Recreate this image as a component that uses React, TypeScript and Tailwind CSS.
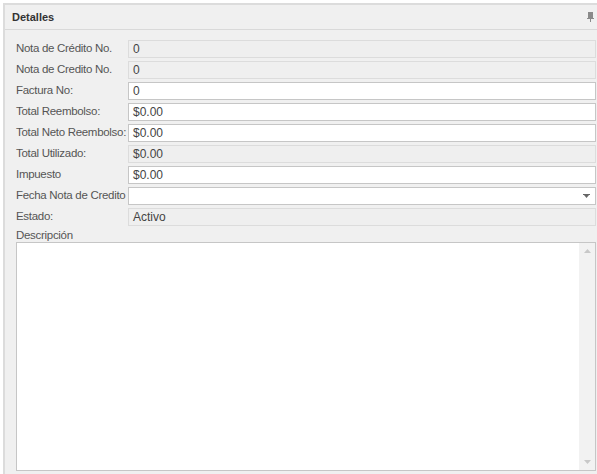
const rows: { label: string; value: string; readOnly?: boolean; select?: boolean }[] = [
  { label: "Nota de Crédito No.", value: "0", readOnly: true },
  { label: "Nota de Credito No.", value: "0", readOnly: true },
  { label: "Factura No:", value: "0" },
  { label: "Total Reembolso:", value: "$0.00" },
  { label: "Total Neto Reembolso:", value: "$0.00" },
  { label: "Total Utilizado:", value: "$0.00", readOnly: true },
  { label: "Impuesto", value: "$0.00" },
  { label: "Fecha Nota de Credito", value: "", select: true },
  { label: "Estado:", value: "Activo", readOnly: true },
];

export default function App() {
  return (
    <div
      className="h-[474px] w-[597px] bg-white pt-[3px] pl-[3px] text-[11px] text-[#333]"
      style={{ fontFamily: "'Liberation Sans', Arial, sans-serif" }}
    >
      <div className="flex h-full flex-col border-t-2 border-l-2 border-[#dcdcdc] bg-[#f0f0f0]">
        {/* header */}
        <div className="flex h-[25px] items-center justify-between border-b border-[#d9d9d9] pl-[7px] pr-[3px]">
          <span className="text-[11px] font-bold text-[#333]">Detalles</span>
          <svg width="7" height="10" viewBox="0 0 7 10">
            <rect x="1" y="0" width="5" height="6" fill="#8a8a8a" />
            <rect x="0" y="6" width="7" height="1" fill="#8a8a8a" />
            <rect x="3" y="7" width="1" height="3" fill="#8a8a8a" />
          </svg>
        </div>

        {/* form */}
        <div className="flex flex-1 flex-col pl-[11px] pr-[1px] pt-[10px] pb-[3px]">
          <div className="flex flex-col gap-[3px]">
            {rows.map((r) => (
              <div key={r.label} className="flex h-[18px] items-center">
                <span className="w-[112px] shrink-0 whitespace-nowrap text-[11.5px] tracking-[-0.3px] text-[#555]">
                  {r.label}
                </span>
                <div
                  className={`flex h-[18px] flex-1 items-center justify-between border px-[4px] text-[12px] ${
                    r.readOnly ? "border-[#dcdcdc] bg-[#efefef]" : "border-[#c6c6c6] bg-white"
                  }`}
                >
                  <span className="text-[#444]">{r.value}</span>
                  {r.select && (
                    <svg width="7" height="4" viewBox="0 0 7 4" className="mr-[1px]">
                      <rect x="0" y="0" width="7" height="1" fill="#666" />
                      <polygon points="1,1 6,1 3.5,4" fill="#666" />
                    </svg>
                  )}
                </div>
              </div>
            ))}
          </div>

          <span className="mt-[2px] h-[14px] text-[11.5px] leading-[14px] tracking-[-0.3px] text-[#555]">
            Descripción
          </span>
          <div className="flex flex-1 border border-[#c6c6c6] bg-white">
            <div className="flex-1" />
            <div className="flex w-[16px] flex-col items-center justify-between bg-[#f2f2f2] py-[6px]">
              <svg width="7" height="4" viewBox="0 0 7 4">
                <polygon points="0,4 7,4 3.5,0" fill="#c8c8c8" />
              </svg>
              <svg width="7" height="4" viewBox="0 0 7 4">
                <polygon points="0,0 7,0 3.5,4" fill="#c8c8c8" />
              </svg>
            </div>
          </div>
        </div>
      </div>
    </div>
  );
}
